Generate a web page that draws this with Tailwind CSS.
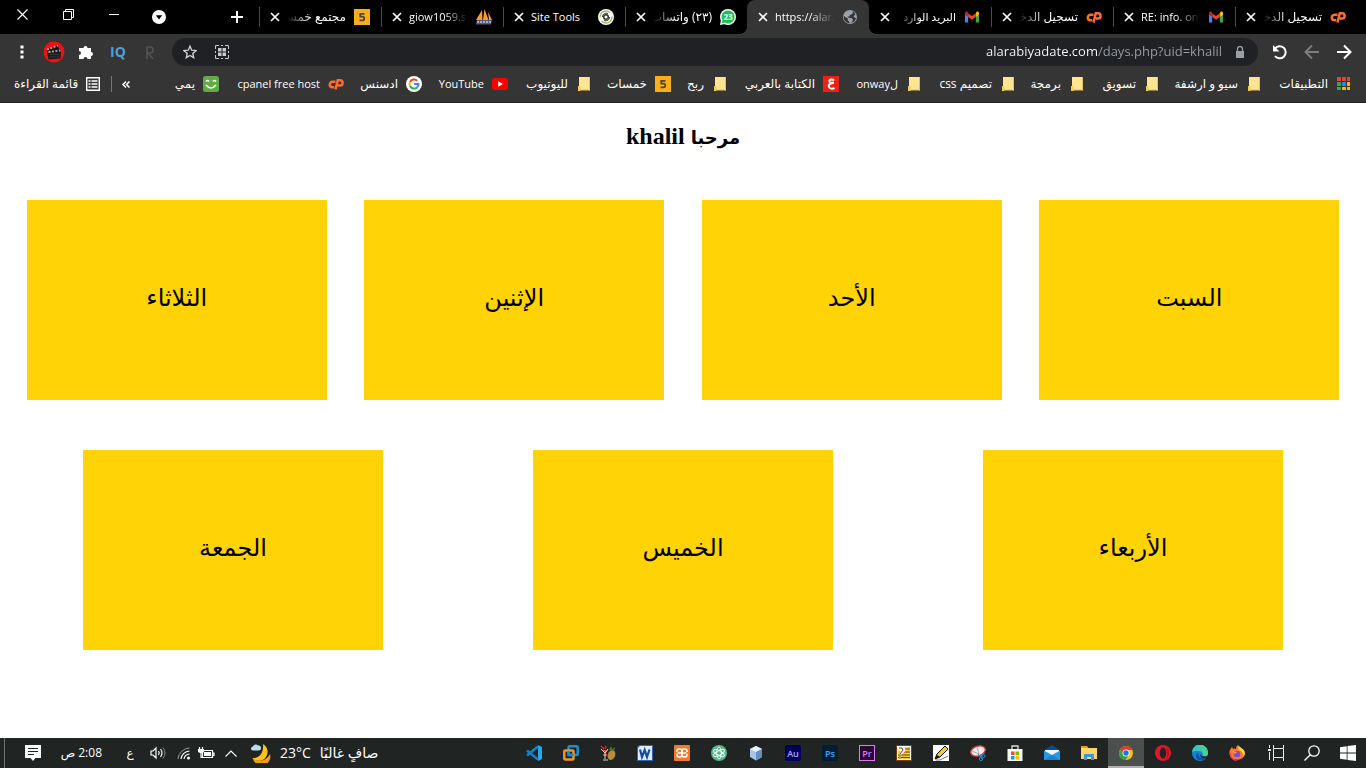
<!DOCTYPE html>
<html lang="ar" dir="rtl">
<head>
<meta charset="utf-8">
<title>alarabiyadate.com</title>
<script src="https://cdn.jsdelivr.net/npm/@tailwindcss/browser@4"></script>
</head>
<body class="h-screen flex flex-col overflow-hidden bg-white font-['Open_Sans','DejaVu_Sans',sans-serif] text-xs text-white">

<svg class="hidden">
  <symbol id="x" viewBox="0 0 10 10"><path d="M1 1l8 8M9 1l-8 8" stroke="#fff" stroke-width="1.700"/></symbol>
  <symbol id="cp" viewBox="0 0 16 16"><path d="M7.500 5.800H4.500a2.700 2.700 0 0 0 0 5.400H6.200M7.500 13.500L9.800 4.300H12a2.500 2.500 0 0 1 0 5.200H9.800" fill="none" stroke="#ff6c2c" stroke-width="2.500"/></symbol>
  <symbol id="gmail" viewBox="0 0 16 16"><path d="M1 4v9.500h3.200V6z" fill="#4285f4"/><path d="M15 4v9.500h-3.200V6z" fill="#34a853"/><path d="M11.800 4.500V8L15 5.700V4c0-1.500-1.500-2-2.500-1.200z" fill="#fbbc04"/><path d="M4.200 4.500V8L8 10.800 11.800 8V4.200L8 7z" fill="#ea4335"/><path d="M4.200 4.500V8L1 5.700V4c0-1.500 1.500-2 2.500-1.200z" fill="#c5221f"/></symbol>
  <symbol id="five" viewBox="0 0 16 16"><path d="M0 0h16v16H0z" fill="#fbae17"/><path d="M10.500 4.800H6.200v2.900h2.300a1.800 1.800 0 0 1 0 3.600H5.500" fill="none" stroke="#4b4438" stroke-width="1.700"/></symbol>
  <symbol id="folder" viewBox="0 0 16 16"><path d="M3 1h11v13H3z" fill="#ffe591"/><path d="M13.500 1v13.500M4 14h10" stroke="#e7c052" /><path d="M2 10h2.500v5H2z" fill="#f3cb5c"/></symbol>
</svg>

<header class="shrink-0">
  <!-- tab strip -->
  <div class="flex h-[34px] bg-black pr-[9px]">
    <div role="tablist" class="flex">
      <div role="tab" class="flex w-[122px] items-center pr-[11px]">
        <svg class="size-4 shrink-0"><use href="#cp"/></svg>
        <span class="mr-2 h-4 w-[59px] overflow-hidden whitespace-nowrap leading-4 [mask-image:linear-gradient(to_right,transparent,black_24px)]">تسجيل الدخول</span>
        <button aria-label="إغلاق" class="mr-[7px] size-[10px]"><svg class="size-full"><use href="#x"/></svg></button>
        <i class="mr-auto h-5 w-px bg-[#4a4a4a]"></i>
      </div>
      <div role="tab" class="flex w-[122px] items-center pr-[11px]">
        <svg class="size-4 shrink-0"><use href="#gmail"/></svg>
        <span dir="ltr" class="mr-2 h-4 w-[59px] overflow-hidden whitespace-nowrap text-[11px] leading-4 [mask-image:linear-gradient(to_left,transparent,black_24px)]">RE: info. on way</span>
        <button aria-label="إغلاق" class="mr-[7px] size-[10px]"><svg class="size-full"><use href="#x"/></svg></button>
        <i class="mr-auto h-5 w-px bg-[#4a4a4a]"></i>
      </div>
      <div role="tab" class="flex w-[122px] items-center pr-[11px]">
        <svg class="size-4 shrink-0"><use href="#cp"/></svg>
        <span class="mr-2 h-4 w-[59px] overflow-hidden whitespace-nowrap leading-4 [mask-image:linear-gradient(to_right,transparent,black_24px)]">تسجيل الدخول</span>
        <button aria-label="إغلاق" class="mr-[7px] size-[10px]"><svg class="size-full"><use href="#x"/></svg></button>
        <i class="mr-auto h-5 w-px bg-[#4a4a4a]"></i>
      </div>
      <div role="tab" class="flex w-[122px] items-center pr-[11px]">
        <svg class="size-4 shrink-0"><use href="#gmail"/></svg>
        <span class="mr-2 h-4 w-[59px] overflow-hidden whitespace-nowrap text-[11px] leading-4 [mask-image:linear-gradient(to_right,transparent,black_24px)]">البريد الوارد</span>
        <button aria-label="إغلاق" class="mr-[7px] size-[10px]"><svg class="size-full"><use href="#x"/></svg></button>
      </div>
      <div role="tab" aria-selected="true" class="relative flex w-[122px] items-center rounded-t-lg bg-[#353535] pr-[11px]">
        <i class="absolute bottom-0 left-full size-2 bg-[radial-gradient(circle_at_top_right,transparent_8px,#353535_8px)]"></i>
        <i class="absolute right-full bottom-0 size-2 bg-[radial-gradient(circle_at_top_left,transparent_8px,#353535_8px)]"></i>
        <svg class="size-4 shrink-0" viewBox="0 0 16 16"><circle cx="8" cy="8" r="7" fill="#9aa0a6"/><path d="M8.500 1.500l2.500 1-.5 2.500-2.500 1-.5 1.500H5.500L7 9h2.500l1.500 1.500-1.500 3.500 3-1.500L14 9.500l-2.500-2 2-2.500-2-2.500z" fill="#353535"/><path d="M1.800 7l4 2.500v2l1.500 1.500v1.500L4 13 2 10.500z" fill="#353535"/></svg>
        <span dir="ltr" class="mr-2 h-4 w-[59px] overflow-hidden whitespace-nowrap text-[11px] leading-4 [mask-image:linear-gradient(to_left,transparent,black_24px)]">https://alarabiya</span>
        <button aria-label="إغلاق" class="mr-[7px] size-[10px]"><svg class="size-full"><use href="#x"/></svg></button>
      </div>
      <div role="tab" class="flex w-[122px] items-center pr-[11px]">
        <svg class="size-4 shrink-0" viewBox="0 0 16 16"><circle cx="8" cy="8" r="8" fill="#fff"/><path d="M0 16l1-5 4 4z" fill="#fff"/><path d="M1.500 14.500l1-3.200a6.500 6.500 0 1 1 2.200 2.200z" fill="#1bc14b"/><text x="8" y="11" direction="ltr" text-anchor="middle" font-size="8" font-weight="700" fill="#fff">23</text></svg>
        <span class="mr-2 h-4 w-[59px] overflow-hidden whitespace-nowrap leading-4 [mask-image:linear-gradient(to_right,transparent,black_24px)]">(٢٣) واتساب</span>
        <button aria-label="إغلاق" class="mr-[7px] size-[10px]"><svg class="size-full"><use href="#x"/></svg></button>
        <i class="mr-auto h-5 w-px bg-[#4a4a4a]"></i>
      </div>
      <div role="tab" class="flex w-[122px] items-center pr-[11px]">
        <svg class="size-4 shrink-0" viewBox="0 0 16 16"><circle cx="8" cy="8" r="8" fill="#fff"/><circle cx="8" cy="8" r="6" fill="none" stroke="#9cc45c" stroke-width="1.500" stroke-dasharray="14 4"/><circle cx="8" cy="8" r="2.300" fill="#fff" stroke="#333" stroke-width="1.500"/><path d="M4.500 8c0-3 3-4.500 5.500-3.500M11.500 8c0 3-3 4.500-5.500 3.500" stroke="#333" fill="none"/></svg>
        <span dir="ltr" class="mr-2 h-4 w-[59px] overflow-hidden whitespace-nowrap text-[11px] leading-4">Site Tools</span>
        <button aria-label="إغلاق" class="mr-[7px] size-[10px]"><svg class="size-full"><use href="#x"/></svg></button>
        <i class="mr-auto h-5 w-px bg-[#4a4a4a]"></i>
      </div>
      <div role="tab" class="flex w-[122px] items-center pr-[11px]">
        <svg class="size-4 shrink-0" viewBox="0 0 16 16"><path d="M0 11L6 1l.5 10zM7 11L8.500 0l4 11zM12 3l4 8h-3z" fill="#f89c2f"/><path d="M1 11h15l-1 4.500H0z" fill="#555a7c"/><path d="M1 13h14" stroke="#c4c6d8" stroke-width="1.500" stroke-dasharray="2 1"/></svg>
        <span dir="ltr" class="mr-2 h-4 w-[59px] overflow-hidden whitespace-nowrap text-[11px] leading-4 [mask-image:linear-gradient(to_left,transparent,black_24px)]">giow1059.siteg</span>
        <button aria-label="إغلاق" class="mr-[7px] size-[10px]"><svg class="size-full"><use href="#x"/></svg></button>
        <i class="mr-auto h-5 w-px bg-[#4a4a4a]"></i>
      </div>
      <div role="tab" class="flex w-[122px] items-center pr-[11px]">
        <svg class="size-4 shrink-0"><use href="#five"/></svg>
        <span class="mr-2 h-4 w-[59px] overflow-hidden whitespace-nowrap leading-4 [mask-image:linear-gradient(to_right,transparent,black_24px)]">مجتمع خمسات</span>
        <button aria-label="إغلاق" class="mr-[7px] size-[10px]"><svg class="size-full"><use href="#x"/></svg></button>
        <i class="mr-auto h-5 w-px bg-[#4a4a4a]"></i>
      </div>
    </div>
    <button aria-label="علامة تبويب جديدة" class="mr-4 w-3"><svg class="size-3" viewBox="0 0 12 12"><path d="M6 0v12M0 6h12" stroke="#fff" stroke-width="2"/></svg></button>
    <div class="mr-auto flex" dir="ltr">
      <button aria-label="إغلاق النافذة" class="flex h-7 w-11 items-center justify-center"><svg class="size-[11px]" viewBox="0 0 11 11"><path d="M.5.5l10 10M10.500.5l-10 10" stroke="#fff" stroke-width="1.200"/></svg></button>
      <button aria-label="استعادة" class="flex h-7 w-12 items-center justify-center"><svg class="size-[11px]" viewBox="0 0 11 11"><path d="M.5 2.500h8v8h-8zM2.500 2.500v-2h8v8h-2" fill="none" stroke="#fff"/></svg></button>
      <button aria-label="تصغير" class="flex h-7 w-11 items-center justify-center"><svg class="h-px w-[10px]"><path d="M0 .5h10" stroke="#fff"/></svg></button>
      <button aria-label="البحث في علامات التبويب" class="flex w-[46px] items-center justify-center"><svg class="size-[14px]" viewBox="0 0 14 14"><circle cx="7" cy="7" r="7" fill="#fff"/><path d="M3.800 5.300h6.400L7 9.500z" fill="#000"/></svg></button>
    </div>
  </div>

  <!-- toolbar -->
  <div class="flex h-9 items-center bg-[#353535] px-[6px]">
    <button aria-label="رجوع" class="flex w-8 justify-center"><svg class="size-4" viewBox="0 0 16 16"><path d="M1 8h13M8 1.500L14.500 8 8 14.500" fill="none" stroke="#fff" stroke-width="2"/></svg></button>
    <button aria-label="تقدم" class="flex w-8 justify-center"><svg class="size-4" viewBox="0 0 16 16"><path d="M15 8H2M8 1.500L1.500 8 8 14.500" fill="none" stroke="#7d7d7d" stroke-width="2"/></svg></button>
    <button aria-label="إعادة تحميل" class="flex w-8 justify-center"><svg class="size-4" viewBox="0 0 16 16"><path d="M3 4.500A6 6 0 1 1 3 12" fill="none" stroke="#fff" stroke-width="2"/><path d="M1 1v6.500h6.500z" fill="#fff"/></svg></button>
    <div class="mx-[6px] flex h-7 flex-1 items-center rounded-full bg-[#202124] pr-3 pl-[10px]">
      <svg class="ml-3 size-3" viewBox="0 0 12 12"><path d="M2 5h8v7H2z" fill="#9aa0a6"/><path d="M3.500 5V3a2.500 2.500 0 0 1 5 0v2" fill="none" stroke="#9aa0a6" stroke-width="1.300"/></svg>
      <input dir="ltr" aria-label="شريط العناوين" value="alarabiyadate.com/days.php?uid=khalil" class="min-w-0 flex-1 bg-[linear-gradient(to_left,#9aa0a6_125px,#fff_125px)] bg-clip-text text-right text-[13px] text-transparent outline-none">
      <button aria-label="رمز QR" class="flex w-8 justify-center"><svg class="size-[14px]" viewBox="0 0 14 14"><path d="M3 3h3.500v3.500H3zM7.500 3H11v3.500H7.500zM3 7.500h3.500V11H3zM7.500 7.500H11V11H7.500z" fill="#c8c8c8"/><path d="M.5 4V.5H4M6 .5h2M10 .5h3.500V4M13.500 6v2M13.500 10v3.500H10M8 13.500H6M4 13.500H.5V10M.5 8V6" fill="none" stroke="#c8c8c8"/></svg></button>
      <button aria-label="إضافة إشارة" class="flex w-8 justify-center -ml-2"><svg class="size-[14px]" viewBox="0 0 14 14"><path d="M7 1.200l1.700 4 4.300.4-3.200 2.900.9 4.200L7 10.500l-3.700 2.200.9-4.200L1 5.600l4.300-.4z" fill="none" stroke="#ccc" stroke-width="1.400"/></svg></button>
    </div>
    <button aria-label="R" class="flex w-8 justify-center"><svg class="h-[13px] w-2" viewBox="0 0 8 13"><path d="M1 13V1h3a2.700 2.700 0 0 1 0 6H2l5 6" fill="none" stroke="#555" stroke-width="1.500"/></svg></button>
    <button class="w-8 text-sm leading-4 font-bold text-[#4f9fdc]">IQ</button>
    <button aria-label="الإضافات" class="flex w-8 justify-center"><svg class="size-4" viewBox="0 0 16 16"><path d="M1 4h4.500a2 2 0 0 1 4 0H13v4a2 2 0 0 1 0 4v3H9.500a2 2 0 0 0-4 0H1v-4a2 2 0 0 0 0-4z" fill="#fff"/></svg></button>
    <button aria-label="مسجل الفيديو" class="flex w-8 justify-center"><svg class="size-[22px]" viewBox="0 0 22 22"><circle cx="11" cy="11" r="10.500" fill="#f30f0f"/><path d="M3.500 8.500L14.500 4l1.200 3L18 9.500l-.5 8-12 1z" fill="#1b1b1b"/><path d="M4 8.500l11-4M5.500 11l12-1.500" stroke="#c99f91" stroke-width="1.800" stroke-dasharray="2 1.500"/><path d="M6.500 13.500h10M6.500 16h10" stroke="#4a4a4a" stroke-width=".6"/></svg></button>
    <button aria-label="القائمة" class="flex w-8 justify-center"><svg class="h-[14px] w-1" viewBox="0 0 4 14"><path d="M.5.500h3v3h-3zM.5 5.500h3v3h-3zM.5 10.500h3v3h-3z" fill="#fff"/></svg></button>
  </div>

  <!-- bookmarks -->
  <nav class="flex h-[33px] items-center border-b border-[#202124] bg-[#353535] px-[14px] pb-1 whitespace-nowrap">
    <a href="#" class="flex w-[90px] items-center gap-2"><svg class="size-4 shrink-0" viewBox="0 0 16 16"><path d="M1 1h4v4H1zM6 1h4v4H6zM11 1h3v4h-3z" fill="#ea4335"/><path d="M1 6h4v4H1zM1 11h4v3H1z" fill="#34a853"/><path d="M6 6h4v4H6z" fill="#1a8cff"/><path d="M11 6h3v4h-3zM6 11h4v3H6zM11 11h3v3h-3z" fill="#fbbc04"/><path d="M5.500 0v16M10.500 0v16M0 5.500h16M0 10.500h16" stroke="#353535" stroke-width="1.200"/></svg>التطبيقات</a>
    <a href="#" class="flex w-[102px] items-center gap-2"><svg class="size-4 shrink-0"><use href="#folder"/></svg>سيو و ارشفة</a>
    <a href="#" class="flex w-[75px] items-center gap-2"><svg class="size-4 shrink-0"><use href="#folder"/></svg>تسويق</a>
    <a href="#" class="flex w-[69px] items-center gap-2"><svg class="size-4 shrink-0"><use href="#folder"/></svg>برمجة</a>
    <a href="#" class="flex w-[94px] items-center gap-2"><svg class="size-4 shrink-0"><use href="#folder"/></svg>تصميم css</a>
    <a href="#" class="flex w-[83px] items-center gap-2 text-[11px]"><svg class="size-4 shrink-0"><use href="#folder"/></svg>لonway</a>
    <a href="#" class="flex w-[111px] items-center gap-2"><svg class="size-4 shrink-0" viewBox="0 0 16 16"><path d="M0 0h16v16H0z" fill="#ee2211"/><path d="M11 4.500c-2-2-5-1-4.500 1 .3 1.500 2 1.500 4.500 1.200-4 .5-6 1.800-5 4.300.8 2 3.500 2 5.500 1" fill="none" stroke="#fff" stroke-width="2"/></svg>الكتابة بالعربي</a>
    <a href="#" class="flex w-[57px] items-center gap-2"><svg class="size-4 shrink-0"><use href="#folder"/></svg>ربح</a>
    <a href="#" class="flex w-[79px] items-center gap-2"><svg class="size-4 shrink-0"><use href="#five"/></svg>خمسات</a>
    <a href="#" class="flex w-[84px] items-center gap-2"><svg class="size-4 shrink-0"><use href="#folder"/></svg>لليوتيوب</a>
    <a href="#" class="flex w-[86px] items-center gap-2 text-[11px]"><svg class="size-4 shrink-0" viewBox="0 0 16 16"><rect y="2" width="16" height="12" rx="3" fill="#f00"/><path d="M6.200 5.200v5.600L11 8z" fill="#fff"/></svg>YouTube</a>
    <a href="#" class="flex w-[78px] items-center gap-2"><svg class="size-4 shrink-0" viewBox="0 0 16 16"><circle cx="8" cy="8" r="8" fill="#fff"/><g fill="none" stroke-width="2"><path d="M11.200 4.800A4.500 4.500 0 0 0 4 6" stroke="#ea4335"/><path d="M4 6a4.500 4.500 0 0 0 0 4" stroke="#fbbc04"/><path d="M4 10a4.500 4.500 0 0 0 7 1.500" stroke="#34a853"/><path d="M11 11.500A4.500 4.500 0 0 0 12.500 8H8" stroke="#4285f4"/></g></svg>ادسنس</a>
    <a href="#" class="flex w-[125px] items-center gap-2 text-[11px]"><svg class="size-4 shrink-0"><use href="#cp"/></svg>cpanel free host</a>
    <a href="#" class="flex items-center gap-2"><svg class="size-4 shrink-0" viewBox="0 0 16 16"><rect width="16" height="16" rx="2.500" fill="#5fac45"/><path d="M3 5.500q1.500-2 3 0M10 5.500q1.500-2 3 0M3 9q5 6 10 0" fill="none" stroke="#fff" stroke-width="1.700"/></svg>يمي</a>
    <button aria-label="المزيد" class="mr-auto ml-[10px]"><svg class="h-[7px] w-2" viewBox="0 0 8 7"><path d="M4 .5l-3 3 3 3M7.500.5l-3 3 3 3" fill="none" stroke="#fff" stroke-width="1.500"/></svg></button>
    <i class="h-4 w-px bg-[#777]"></i>
    <button class="mr-[11px] flex items-center gap-2"><svg class="size-[14px]" viewBox="0 0 14 14"><path d="M.7.7h12.600v12.600H.7z" fill="none" stroke="#fff" stroke-width="1.400"/><path d="M2.500 4h2M5.500 4h6M2.500 7h2M5.500 7h6M2.500 10h2M5.500 10h6" stroke="#fff" stroke-width="1.500"/></svg>قائمة القراءة</button>
  </nav>
</header>

<main class="min-h-0 flex-1 px-2 font-['Liberation_Serif','DejaVu_Sans',serif] text-black">
  <h1 class="h-[72px] pt-[17px] text-center text-2xl leading-8 font-bold"><span class="text-lg">مرحبا</span> khalil</h1>
  <div class="flex flex-wrap justify-around text-2xl">
    <a href="#" class="my-[25px] flex h-[200px] w-[300px] items-center justify-center bg-[#ffd306] pb-1">السبت</a>
    <a href="#" class="my-[25px] flex h-[200px] w-[300px] items-center justify-center bg-[#ffd306] pb-1">الأحد</a>
    <a href="#" class="my-[25px] flex h-[200px] w-[300px] items-center justify-center bg-[#ffd306] pb-1">الإثنين</a>
    <a href="#" class="my-[25px] flex h-[200px] w-[300px] items-center justify-center bg-[#ffd306] pb-1">الثلاثاء</a>
    <a href="#" class="my-[25px] flex h-[200px] w-[300px] items-center justify-center bg-[#ffd306] pb-1">الأربعاء</a>
    <a href="#" class="my-[25px] flex h-[200px] w-[300px] items-center justify-center bg-[#ffd306] pb-1">الخميس</a>
    <a href="#" class="my-[25px] flex h-[200px] w-[300px] items-center justify-center bg-[#ffd306] pb-1">الجمعة</a>
  </div>
</main>

<footer class="flex h-[30px] shrink-0 justify-between bg-[#202422]">
  <div class="flex">
    <button aria-label="ابدأ" class="flex w-9 items-center justify-center"><svg class="size-4" viewBox="0 0 16 16"><path d="M0 2.200l6.700-1v6.300H0zM7.500 1.100L16 0v7.500H7.500zM0 8.400h6.700v6.400L0 13.800zM7.500 8.400H16V16l-8.500-1.100z" fill="#fff"/></svg></button>
    <button aria-label="بحث" class="flex w-9 items-center justify-center"><svg class="size-4" viewBox="0 0 16 16"><circle cx="10" cy="6" r="5.200" fill="none" stroke="#fff" stroke-width="1.300"/><path d="M6.300 9.700L.5 15.500" stroke="#fff" stroke-width="1.400"/></svg></button>
    <button aria-label="عرض المهام" class="ml-[3px] flex w-9 items-center justify-center"><svg class="size-4" viewBox="0 0 16 16"><path d="M5.500 0v3.500h10V0M5.500 16v-3.500h10V16M5.500 3.500v9M15.500 3.500v9M1.500 0v3M1.500 7v8" fill="none" stroke="#eee"/><path d="M0 4h3v2H0z" fill="#eee"/></svg></button>
    <div class="flex gap-px">
      <button aria-label="Firefox" class="flex w-9 items-center justify-center"><svg class="size-4" viewBox="0 0 16 16"><path d="M.5 7C.5 5 2 3 3 2l1 2c1-1 2-.5 3 0 0-2 1-3.500 2-4 1 3 7 3 7 9a8 7.500 0 0 1-15.500 0z" fill="#ff7a28"/><path d="M9 0c1 3 7 3 7 9l-2 3c1-4-2-6-4-7z" fill="#ffd23c"/><path d="M.5 9a8 7 0 0 0 9 7C5 15 2 12 2 8z" fill="#f43a64"/><circle cx="8" cy="9" r="3.300" fill="#8046dd"/><path d="M3 6l5 1-2 2z" fill="#ffad35"/></svg></button>
      <button aria-label="Edge" class="flex w-9 items-center justify-center"><svg class="size-4" viewBox="0 0 16 16"><circle cx="8" cy="8" r="8" fill="#1584d0"/><path d="M0 7a8 8 0 0 1 16 1c0 3-3 4-5.500 3 1-2 0-5-4-5S1 6 0 7z" fill="#39c5c0"/><path d="M8 0a8 8 0 0 1 8 8c0 3-3 4-5.500 3 1-2 2-6-3-8z" fill="#5dd36b" opacity=".6"/><path d="M6.500 8c-1 4 3 6 7.500 4-2 5-10 4-10-1 0-2 1-3 2.500-3z" fill="#0c54a4"/><path d="M8.500 8c-1 2.500 3 4 6 3.200l1.500.3-1 2C11 14 7 12 8.500 8z" fill="#222624"/></svg></button>
      <button aria-label="Opera" class="flex w-9 items-center justify-center"><svg class="size-4" viewBox="0 0 16 16"><circle cx="8" cy="8" r="8" fill="#e81528"/><ellipse cx="8" cy="8" rx="3.200" ry="5.700" fill="#202422"/><path d="M10 1a8 8 0 0 1 0 14c3-3 3-11 0-14z" fill="#b51220"/></svg></button>
      <button aria-label="Chrome" class="flex w-9 items-center justify-center border-b-2 border-[#b5aea8] bg-[#4b4f4e] pt-[2px]"><svg class="size-[14px]" viewBox="0 0 16 16"><circle cx="8" cy="8" r="8" fill="#fbc116"/><path d="M8 4.500H15.200A8 8 0 0 0 1.100 4l3.700 6z" fill="#e33b2e"/><path d="M1.100 4A8 8 0 0 0 7.500 16l4-6-6.500 0z" fill="#28a745"/><circle cx="8" cy="8" r="4" fill="#fff"/><circle cx="8" cy="8" r="3.100" fill="#1a73e8"/></svg></button>
      <button aria-label="مستكشف الملفات" class="flex w-9 items-center justify-center"><svg class="size-4" viewBox="0 0 16 16"><path d="M0 1h6l1.500 2H0z" fill="#e0a01b"/><path d="M0 3h16v11H0z" fill="#ffd665"/><path d="M3 15V9h10v6h-3v-3H6v3z" fill="#3a97dc"/></svg></button>
      <button aria-label="البريد" class="flex w-9 items-center justify-center"><svg class="size-4" viewBox="0 0 16 16"><path d="M0 5.500L8 0l8 5.500z" fill="#0a4c8d"/><path d="M1 5h14v5H1z" fill="#eef5fc"/><path d="M0 5.500L8 10l8-4.500V15H0z" fill="#249bea"/><path d="M0 15l8-5 8 5z" fill="#1784d6"/></svg></button>
      <button aria-label="المتجر" class="flex w-9 items-center justify-center"><svg class="size-4" viewBox="0 0 16 16"><path d="M5 5V1h6v4" fill="none" stroke="#ddd" stroke-width="1.300"/><path d="M.5 4h15v12H.5z" fill="#f7f7f7"/><path d="M4 6.500h3.500V10H4z" fill="#f25022"/><path d="M8.500 6.500H12V10H8.500z" fill="#7fba00"/><path d="M4 11h3.500v3.500H4z" fill="#00a4ef"/><path d="M8.500 11H12v3.500H8.500z" fill="#ffb900"/></svg></button>
      <button aria-label="أداة القطع" class="flex w-9 items-center justify-center"><svg class="size-4" viewBox="0 0 16 16"><ellipse cx="8" cy="6" rx="7.500" ry="4.800" transform="rotate(-18 8 6)" fill="#f3eded" stroke="#d1393d" stroke-width="1.400"/><path d="M9 9L7 2M9 9L2 6" stroke="#999" stroke-width=".8"/><path d="M8 9l4 5M14 8l-4 4" stroke="#248bd2" stroke-width="1.200"/><circle cx="13.500" cy="11" r="1.600" fill="none" stroke="#248bd2"/><circle cx="11" cy="14" r="1.600" fill="none" stroke="#248bd2"/></svg></button>
      <button aria-label="محرر" class="flex w-9 items-center justify-center"><svg class="size-4" viewBox="0 0 16 16"><path d="M0 0h16v16H0z" fill="#fff"/><path d="M2 14l2-5 8-8 3 3-8 8z" fill="#f4ca2f" stroke="#111"/><path d="M2 14l2-4 3 2z" fill="#111"/><path d="M3 15h4l8-4" fill="none" stroke="#777"/></svg></button>
      <button aria-label="مدير الملفات" class="flex w-9 items-center justify-center"><svg class="size-4" viewBox="0 0 16 16"><path d="M0 0h16v16H0z" fill="#734006"/><path d="M1 1h14v14H1z" fill="#fff"/><path d="M2 2h12v12H2z" fill="#ffc93c"/><path d="M8 4h6M8 7h6M2 10h12M2 12.500h12" stroke="#713f08" stroke-width="1.200"/><path d="M2 2h5c3 0 3 5 1 5L5 10v4H3V9l2-3-3-1z" fill="#fff"/><path d="M3 3h3l1 2-3 4v5" fill="none" stroke="#713f08"/></svg></button>
      <button aria-label="Premiere" class="flex w-9 items-center justify-center"><span dir="ltr" class="flex size-4 items-center justify-center border border-[#dc7bf0] bg-[#2c0535] text-[9px] leading-none font-semibold text-[#dc7bf0]">Pr</span></button>
      <button aria-label="Photoshop" class="flex w-9 items-center justify-center"><span dir="ltr" class="flex size-4 items-center justify-center rounded-xs bg-[#001d33] text-[9px] leading-none font-semibold text-[#35a8ff]">Ps</span></button>
      <button aria-label="Audition" class="flex w-9 items-center justify-center"><span dir="ltr" class="flex size-4 items-center justify-center rounded-xs bg-[#00005c] text-[9px] leading-none font-semibold text-[#aaa8ff]">Au</span></button>
      <button aria-label="NetBeans" class="flex w-9 items-center justify-center"><svg class="size-4" viewBox="0 0 16 16"><path d="M8 1l6 3v8l-6 3.500L2 12V4z" fill="#a9c6e8"/><path d="M8 1l6 3-6 3-6-3z" fill="#eaf3fc"/><path d="M8 7l6-3v8l-6 3.500z" fill="#6690c5"/></svg></button>
      <button aria-label="Atom" class="flex w-9 items-center justify-center"><svg class="size-4" viewBox="0 0 16 16"><circle cx="8" cy="8" r="8" fill="#56b487"/><g fill="none" stroke="#e8fff4"><ellipse cx="8" cy="8" rx="2.300" ry="6"/><ellipse cx="8" cy="8" rx="2.300" ry="6" transform="rotate(60 8 8)"/><ellipse cx="8" cy="8" rx="2.300" ry="6" transform="rotate(120 8 8)"/></g></svg></button>
      <button aria-label="XAMPP" class="flex w-9 items-center justify-center"><svg class="size-4" viewBox="0 0 16 16"><rect width="16" height="16" rx="1" fill="#f37827"/><rect x="3" y="4" width="5" height="8" rx="2.200" fill="none" stroke="#fff" stroke-width="1.700"/><rect x="8" y="4" width="5" height="8" rx="2.200" fill="none" stroke="#fff" stroke-width="1.700"/><path d="M4 8h8" stroke="#fff" stroke-width="1.500"/><path d="M1.500 7h2v2h-2zM12.500 7h2v2h-2z" fill="#f37827"/></svg></button>
      <button aria-label="Word" class="flex w-9 items-center justify-center"><svg class="size-4" viewBox="0 0 16 16"><path d="M2 0h14v16H0V2z" fill="#2d66b4"/><path d="M3 1h12v14H1V3z" fill="#dfeafa"/><path d="M3 4.500l2 7.500 2.700-7 2.300 7 2.500-7.500" fill="none" stroke="#164c9d" stroke-width="2.200"/></svg></button>
      <button aria-label="كوكتيل" class="flex w-9 items-center justify-center"><svg class="size-4" viewBox="0 0 16 16"><ellipse cx="11.500" cy="10" rx="3.700" ry="5" transform="rotate(20 11.500 10)" fill="#b38d37"/><path d="M9 5l2-4 1 3 3-2-1 4z" fill="#397d34"/><path d="M2 5h6L5.500 9zM3 9h4v2H3z" fill="#e3443c"/><path d="M1 4l4 4 3-4M5 8v6M3 15h5" stroke="#d9d5ca" fill="none"/><path d="M1 1l3 3M6 1L5 4" stroke="#d82828" stroke-width="1.500"/></svg></button>
      <button aria-label="VMware" class="flex w-9 items-center justify-center"><svg class="size-4" viewBox="0 0 16 16"><rect x="5.500" y="1.300" width="9.200" height="8.700" rx="1" fill="none" stroke="#1193d3" stroke-width="2.500"/><rect x="1.300" y="5.500" width="9.200" height="9" rx="1" fill="none" stroke="#f7941d" stroke-width="2.500"/><path d="M5.500 6v4h5" fill="none" stroke="#1193d3" stroke-width="2.500"/></svg></button>
      <button aria-label="VS Code" class="flex w-9 items-center justify-center"><svg class="size-4" viewBox="0 0 16 16"><path d="M12 0l4 2v12l-4 2z" fill="#2aa7ef"/><path d="M12 1.500L1 10.500M12 14.500L1 5.500" stroke="#1382c8" stroke-width="2.600"/></svg></button>
    </div>
  </div>

  <div dir="ltr" class="flex items-center">
    <i class="ml-1 h-full w-px bg-[#707372]"></i>
    <button aria-label="الإشعارات" class="ml-5"><svg class="size-4" viewBox="0 0 16 16"><path d="M0 0h16v13h-5.500L8 16l-2.500-3H0z" fill="#fff"/><path d="M3 3.500h10M3 6.500h10M3 9.500h6" stroke="#202422" stroke-width="1.200"/></svg></button>
    <time dir="rtl" class="ml-[21px] w-10 whitespace-nowrap">2:08 ص</time>
    <button class="ml-[22px] w-3">ع</button>
    <svg class="ml-[14px] h-[14px] w-[17px]" viewBox="0 0 17 14"><path d="M1 5h2l3-3v10L3 9H1zM8.500 5q1.500 2 0 4M10.500 3q3 4 0 8" fill="none" stroke="#fff" stroke-width="1.200"/><path d="M13 1.500q4 5.500 0 11" fill="none" stroke="#888"/></svg>
    <svg class="ml-[10px] size-[14px]" viewBox="0 0 14 14"><path d="M1 13A12 12 0 0 1 12.500 2" fill="none" stroke="#999"/><path d="M4 13a9 9 0 0 1 8.500-8M7 13a6 6 0 0 1 5.500-5" fill="none" stroke="#fff" stroke-width="1.200"/><circle cx="11.500" cy="12" r="1.500" fill="#fff"/></svg>
    <svg class="ml-[7px] h-3 w-[17px]" viewBox="0 0 17 12"><path d="M4.500 3.500h10v7h-10zM14.500 6H16v2.500h-1.500M1.500 0v2M4.500 0v2M3 6v4.500h2" fill="none" stroke="#fff" stroke-width="1.200"/><path d="M6 5h7v4H6zM0 2h6v3L4 6H2L0 5z" fill="#fff"/></svg>
    <button aria-label="إظهار الأيقونات المخفية" class="ml-[10px]"><svg class="h-[7px] w-3" viewBox="0 0 12 7"><path d="M.5 6.500L6 1l5.500 5.500" fill="none" stroke="#fff" stroke-width="1.200"/></svg></button>
    <button class="ml-[14px] flex items-center gap-[9px] text-sm">
      <svg class="size-5" viewBox="0 0 20 20"><path d="M12 1a9 9 0 1 1-11 14c7 1 12-5 11-14z" fill="#fdc31d"/><path d="M19 11a8.500 8.500 0 0 1-17 5c7 3 13 2 17-5z" fill="#f59e0d"/><path d="M2 7.500a2 2 0 0 1 0-4 3 3 0 0 1 5-1 2.500 2.500 0 0 1 1 5z" fill="#b9def5"/></svg>
      <span>23°C</span><span dir="rtl">صافٍ غالبًا</span>
    </button>
  </div>
</footer>
</body>
</html>
